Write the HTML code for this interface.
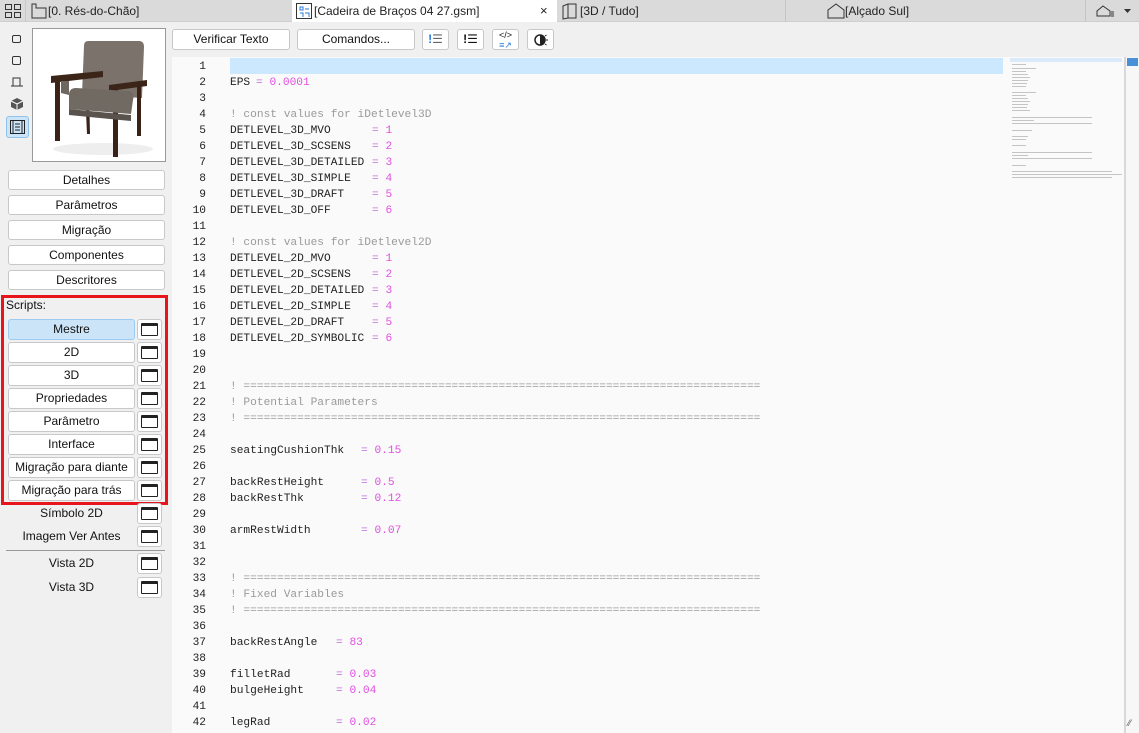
<!DOCTYPE html><html><head><style>
*,*::after,*::before{margin:0;padding:0;box-sizing:border-box}
body{width:1139px;height:733px;overflow:hidden;background:#f0f0f0;font-family:"Liberation Sans",sans-serif;font-size:12px;color:#111;position:relative}
.a{position:absolute}
.tabs{left:0;top:0;width:1139px;height:22px;background:#dadada;border-bottom:1px solid #cfcfcf}
.tab{top:0;height:22px;line-height:22px;font-size:12px;color:#222}
.btn{position:absolute;background:#fff;border:1px solid #c8c8c8;border-radius:3px;text-align:center;font-size:12px;line-height:19px;color:#111}
.ib{position:absolute;width:25px;height:21px;background:#fff;border:1px solid #c8c8c8;border-radius:3px}
.ib::after{content:"";position:absolute;left:3px;top:3px;width:17px;height:13px;border:1.5px solid #222;border-top-width:3px;border-radius:1px}
.code{left:172px;top:57px;width:952px;height:676px;background:#fafafa}
.ln{position:absolute;height:16px;line-height:16px;font-family:"Liberation Mono",monospace;font-size:11.2px;white-space:pre}
.num{width:34px;text-align:right;left:172px;color:#222}
.t{color:#222}
.c{color:#9a9a9a}
.e{color:#c070d8}
.v{color:#e050e0}
</style></head><body>
<div class="a tabs"></div>
<div class="a" style="left:0;top:0;width:26px;height:22px;border-right:1px solid #c8c8c8"></div>
<svg class="a" style="left:5px;top:4px" width="16" height="14"><rect x="0.5" y="0.5" width="6" height="5" fill="none" stroke="#333"/><rect x="9.5" y="0.5" width="6" height="5" fill="none" stroke="#333"/><rect x="0.5" y="8.5" width="6" height="5" fill="none" stroke="#333"/><rect x="9.5" y="8.5" width="6" height="5" fill="none" stroke="#333"/></svg>
<svg class="a" style="left:31px;top:3px" width="16" height="16"><path d="M1 1h4v4h10v10H1z" fill="none" stroke="#333"/></svg>
<div class="a tab" style="left:48px">[0. Rés-do-Chão]</div>
<div class="a" style="left:292px;top:0;width:265px;height:22px;background:#fff"></div>
<svg class="a" style="left:296px;top:3px" width="16" height="16"><rect x="0.5" y="0.5" width="15" height="15" fill="none" stroke="#333"/><path d="M4 4h3v3H4zM9 6h4M4 10h3v4M9 10h4v4" stroke="#2a7ad8" fill="none"/></svg>
<div class="a tab" style="left:314px">[Cadeira de Braços 04 27.gsm]</div>
<div class="a tab" style="left:540px;font-size:13px">×</div>
<svg class="a" style="left:562px;top:3px" width="16" height="17"><path d="M1 3l5-2h8v14H6l-5 1z M6 1v14" fill="none" stroke="#333"/></svg>
<div class="a tab" style="left:580px">[3D / Tudo]</div>
<div class="a" style="left:785px;top:0;width:1px;height:22px;background:#c4c4c4"></div>
<svg class="a" style="left:827px;top:3px" width="18" height="16"><path d="M1 7l8-6 8 6v8H1z" fill="none" stroke="#333"/></svg>
<div class="a tab" style="left:845px">[Alçado Sul]</div>
<div class="a" style="left:1085px;top:0;width:1px;height:22px;background:#c4c4c4"></div>
<svg class="a" style="left:1096px;top:4px" width="40" height="14"><path d="M1 7l6-5 7 5v5H1z" fill="none" stroke="#333"/><path d="M15 8h3M15 10h3M15 12h3" stroke="#333"/><path d="M28 5h7l-3.5 4z" fill="#333"/></svg>

<div class="btn" style="left:172px;top:29px;width:118px;height:21px">Verificar Texto</div>
<div class="btn" style="left:297px;top:29px;width:118px;height:21px">Comandos...</div>
<div class="btn" style="left:422px;top:29px;width:27px;height:21px"><span style="color:#2a7ad8;font-weight:bold">!</span><span style="color:#666">☰</span></div>
<div class="btn" style="left:457px;top:29px;width:27px;height:21px"><b>!</b>☰</div>
<div class="btn" style="left:492px;top:29px;width:27px;height:21px;font-size:9px;line-height:10px">&lt;/&gt;<br><span style="color:#2a7ad8">≡↗</span></div>
<div class="btn" style="left:527px;top:29px;width:27px;height:21px"><svg width="16" height="16" style="margin-top:2px"><circle cx="7" cy="8" r="5" fill="none" stroke="#222" stroke-width="1.5"/><path d="M7 3a5 5 0 0 1 0 10z" fill="#222"/><path d="M13 8h2M12 4l1.5-1M12 12l1.5 1" stroke="#222"/></svg></div>

<svg class="a" style="left:10px;top:34px" width="14" height="110">
<rect x="2.5" y="1.5" width="8" height="7" rx="1.5" fill="none" stroke="#333"/>
<rect x="2.5" y="22.5" width="8" height="8" rx="1.5" fill="none" stroke="#333"/>
<path d="M3 52v-8h7v8M1 52h12" fill="none" stroke="#333"/>
<path d="M7 64l6 3v6l-6 3-6-3v-6z" fill="#555"/><path d="M1 67l6 3 6-3M7 70v6" stroke="#fff" fill="none"/>
</svg>
<div class="a" style="left:6px;top:116px;width:23px;height:22px;background:#cce4f7;border:1px solid #8fc2ec;border-radius:3px"></div>
<svg class="a" style="left:9px;top:119px" width="17" height="16"><rect x="1.5" y="1.5" width="14" height="13" fill="none" stroke="#222"/><path d="M4 2v12M13 2v12M6 5h5M6 8h5M6 11h5" stroke="#222"/></svg>

<div class="a" style="left:32px;top:28px;width:134px;height:134px;background:#fff;border:1px solid #999"></div>
<svg class="a" style="left:33px;top:29px" width="132" height="132">
<ellipse cx="70" cy="120" rx="50" ry="6" fill="#eee"/>
<path d="M55 12q-4 0-4 5l-2 48 60 4 2-51q0-6-5-6z" fill="#7a726b"/>
<path d="M18 47l52-5v6l-52 6z" fill="#3b2418"/>
<path d="M76 56l38-5v6l-38 5z" fill="#3b2418"/>
<path d="M22 52v60h5V53zM52 60l2 45h3l-1-45zM80 60v68h5V60zM104 55v52h4V55z" fill="#3a2217"/>
<path d="M36 66q0-7 7-7l52 3q7 1 5 9l-2 14-62-5z" fill="#716a63"/>
<path d="M36 80l62 6v6l-62-6z" fill="#5a534d"/>
<path d="M28 52l0 12 8 2v-14z" fill="#6e6760"/>
</svg>

<div class="btn" style="left:8px;top:170px;width:157px;height:20px;line-height:18px">Detalhes</div>
<div class="btn" style="left:8px;top:195px;width:157px;height:20px;line-height:18px">Parâmetros</div>
<div class="btn" style="left:8px;top:220px;width:157px;height:20px;line-height:18px">Migração</div>
<div class="btn" style="left:8px;top:245px;width:157px;height:20px;line-height:18px">Componentes</div>
<div class="btn" style="left:8px;top:270px;width:157px;height:20px;line-height:18px">Descritores</div>

<div class="a" style="left:1px;top:295px;width:167px;height:210px;border:3px solid #e8141b"></div>
<div class="a" style="left:6px;top:298px;font-size:12px">Scripts:</div>
<div class="btn" style="left:8px;top:319px;width:127px;height:21px;background:#cce4f7;border-color:#9ccaf0">Mestre</div><div class="ib" style="left:137px;top:319px"></div>
<div class="btn" style="left:8px;top:342px;width:127px;height:21px">2D</div><div class="ib" style="left:137px;top:342px"></div>
<div class="btn" style="left:8px;top:365px;width:127px;height:21px">3D</div><div class="ib" style="left:137px;top:365px"></div>
<div class="btn" style="left:8px;top:388px;width:127px;height:21px">Propriedades</div><div class="ib" style="left:137px;top:388px"></div>
<div class="btn" style="left:8px;top:411px;width:127px;height:21px">Parâmetro</div><div class="ib" style="left:137px;top:411px"></div>
<div class="btn" style="left:8px;top:434px;width:127px;height:21px">Interface</div><div class="ib" style="left:137px;top:434px"></div>
<div class="btn" style="left:8px;top:457px;width:127px;height:21px">Migração para diante</div><div class="ib" style="left:137px;top:457px"></div>
<div class="btn" style="left:8px;top:480px;width:127px;height:21px">Migração para trás</div><div class="ib" style="left:137px;top:480px"></div>
<div class="btn" style="left:8px;top:504px;width:127px;height:21px;background:none;border:none">Símbolo 2D</div><div class="ib" style="left:137px;top:503px"></div>
<div class="btn" style="left:8px;top:527px;width:127px;height:21px;background:none;border:none">Imagem Ver Antes</div><div class="ib" style="left:137px;top:526px"></div>
<div class="a" style="left:6px;top:550px;width:159px;height:1px;background:#999"></div>
<div class="btn" style="left:8px;top:554px;width:127px;height:21px;background:none;border:none">Vista 2D</div><div class="ib" style="left:137px;top:553px"></div>
<div class="btn" style="left:8px;top:578px;width:127px;height:21px;background:none;border:none">Vista 3D</div><div class="ib" style="left:137px;top:577px"></div>

<div class="a code"></div>
<div class="a" style="left:230px;top:58px;width:773px;height:16px;background:#cce8ff"></div>
<div class="a" style="left:1124px;top:57px;width:2px;height:676px;background:#d8d8d8"></div>
<div class="a" style="left:1126px;top:57px;width:13px;height:676px;background:#f7f7f7"></div>
<div class="a" style="left:1127px;top:58px;width:11px;height:8px;background:#4a90d9"></div>
<div class="a" style="left:1010px;top:58px;width:112px;height:4px;background:#dbeafb"></div>
<svg class="a" style="left:1010px;top:62px" width="112" height="120" opacity="0.55">
<g fill="#999"><rect x="2" y="2" width="14" height="1"/><rect x="2" y="6" width="24" height="1"/><rect x="2" y="9" width="14" height="1"/><rect x="2" y="12" width="16" height="1"/><rect x="2" y="15" width="18" height="1"/><rect x="2" y="18" width="16" height="1"/><rect x="2" y="21" width="15" height="1"/><rect x="2" y="24" width="14" height="1"/><rect x="2" y="30" width="24" height="1"/><rect x="2" y="33" width="14" height="1"/><rect x="2" y="36" width="16" height="1"/><rect x="2" y="39" width="18" height="1"/><rect x="2" y="42" width="16" height="1"/><rect x="2" y="45" width="15" height="1"/><rect x="2" y="48" width="18" height="1"/><rect x="2" y="55" width="80" height="1"/><rect x="2" y="58" width="22" height="1"/><rect x="2" y="61" width="80" height="1"/><rect x="2" y="68" width="20" height="1"/><rect x="2" y="74" width="16" height="1"/><rect x="2" y="77" width="14" height="1"/><rect x="2" y="83" width="14" height="1"/><rect x="2" y="90" width="80" height="1"/><rect x="2" y="93" width="16" height="1"/><rect x="2" y="96" width="80" height="1"/><rect x="2" y="103" width="14" height="1"/><rect x="2" y="109" width="100" height="1"/><rect x="2" y="112" width="110" height="1"/><rect x="2" y="115" width="100" height="1"/></g>
</svg>
<div class="a" style="left:1128px;top:718px;width:10px;height:12px;font-size:9px;color:#555">⁄⁄</div>

<div id="lines"></div>
<script>
var L=[
["",""],["EPS",257,"0.0001"],["",""],["#! const values for iDetlevel3D"],
["DETLEVEL_3D_MVO",373,"1"],["DETLEVEL_3D_SCSENS",373,"2"],["DETLEVEL_3D_DETAILED",373,"3"],["DETLEVEL_3D_SIMPLE",373,"4"],["DETLEVEL_3D_DRAFT",373,"5"],["DETLEVEL_3D_OFF",373,"6"],
["",""],["#! const values for iDetlevel2D"],
["DETLEVEL_2D_MVO",373,"1"],["DETLEVEL_2D_SCSENS",373,"2"],["DETLEVEL_2D_DETAILED",373,"3"],["DETLEVEL_2D_SIMPLE",373,"4"],["DETLEVEL_2D_DRAFT",373,"5"],["DETLEVEL_2D_SYMBOLIC",373,"6"],
["",""],["",""],["#! ============================================================================="],["#! Potential Parameters"],["#! ============================================================================="],["",""],
["seatingCushionThk",362,"0.15"],["",""],["backRestHeight",362,"0.5"],["backRestThk",362,"0.12"],["",""],["armRestWidth",362,"0.07"],["",""],["",""],
["#! ============================================================================="],["#! Fixed Variables"],["#! ============================================================================="],["",""],
["backRestAngle",337,"83"],["",""],["filletRad",337,"0.03"],["bulgeHeight",337,"0.04"],["",""],["legRad",337,"0.02"]];
var h="";
L.forEach(function(r,i){var y=59+i*16;
h+='<div class="ln num" style="top:'+y+'px">'+(i+1)+'</div>';
if(r[0][0]=="#")h+='<div class="ln c" style="left:230px;top:'+y+'px">'+r[0].slice(1)+'</div>';
else if(r[0]){h+='<div class="ln t" style="left:230px;top:'+y+'px">'+r[0]+'</div><div class="ln" style="left:'+(r[1]-1)+'px;top:'+y+'px"><span class="e">=</span> <span class="v">'+r[2]+'</span></div>';}
});
document.getElementById("lines").innerHTML=h;
</script>
</body></html>
